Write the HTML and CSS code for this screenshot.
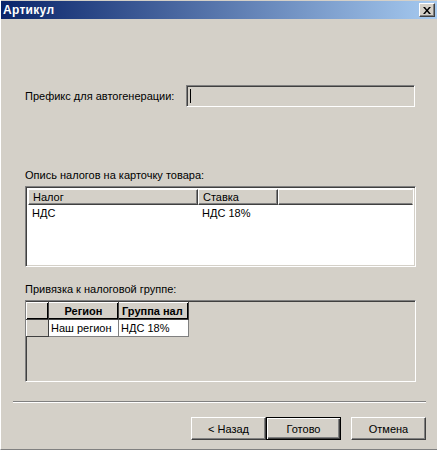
FILE: index.html
```html
<!DOCTYPE html>
<html lang="ru">
<head>
<meta charset="utf-8">
<title>Артикул</title>
<link rel="stylesheet" href="styles.css">
</head>
<body>
<div class="window">
  <div class="titlebar">
    <span class="title">Артикул</span>
    <button class="close" aria-label="Закрыть">
      <svg width="8" height="7" viewBox="0 0 8 7"><path d="M0 0h2l2 2.5L6 0h2L5 3.5 8 7H6L4 4.5 2 7H0l3-3.5z" fill="#000"/></svg>
    </button>
  </div>

  <div class="body">
    <div class="prefix-row">
      <label class="prefix-label">Префикс для автогенерации:</label>
      <div class="field sunken"><span class="caret"></span></div>
    </div>

    <div class="group taxes">
      <div class="caption">Опись налогов на карточку товара:</div>
      <div class="listview sunken">
        <div class="lv-head">
          <div class="lv-col c1">Налог</div>
          <div class="lv-col c2">Ставка</div>
          <div class="lv-col c3"></div>
        </div>
        <div class="lv-row">
          <div class="lv-cell c1">НДС</div>
          <div class="lv-cell c2">НДС 18%</div>
        </div>
      </div>
    </div>

    <div class="group binding">
      <div class="caption">Привязка к налоговой группе:</div>
      <div class="grid sunken">
        <table class="tbl">
          <tr>
            <th class="stub"></th>
            <th class="col-region">Регион</th>
            <th class="col-group">Группа нал</th>
          </tr>
          <tr>
            <td class="stub"></td>
            <td>Наш регион</td>
            <td>НДС 18%</td>
          </tr>
        </table>
      </div>
    </div>

    <div class="separator"></div>

    <div class="buttons">
      <button class="btn">&lt; Назад</button>
      <button class="btn default">Готово</button>
      <button class="btn cancel">Отмена</button>
    </div>
  </div>
</div>
</body>
</html>
```
FILE: styles.css
```css
* { box-sizing: border-box; }

html, body {
  margin: 0;
  padding: 0;
  background: #d4d0c8;
}

body {
  width: 437px;
  height: 450px;
  font-family: Tahoma, "Liberation Sans", "DejaVu Sans", sans-serif;
  font-size: 11px;
  color: #000;
  overflow: hidden;
}

.window {
  width: 437px;
  height: 450px;
  border-bottom: 1px solid #808080;
  border-left: 1px solid #fff;
  display: flex;
  flex-direction: column;
}

/* caption bar with the classic blue gradient */
.titlebar {
  margin-top: 1px;
  height: 18px;
  background: linear-gradient(to right, #0a246a, #a6caf0);
  display: flex;
  align-items: center;
  justify-content: space-between;
  padding: 0 2px 0 2px;
}

.title {
  color: #fff;
  font-weight: bold;
  font-size: 12px;
  letter-spacing: 0.3px;
}

.close {
  width: 16px;
  height: 14px;
  padding: 0;
  margin: 0;
  background: #d4d0c8;
  border: 1px solid;
  border-color: #fff #404040 #404040 #fff;
  box-shadow: inset -1px -1px #808080;
  display: flex;
  align-items: center;
  justify-content: center;
}

.body {
  flex: 1;
  display: flex;
  flex-direction: column;
  padding: 0 11px 0 11px;
}

/* 3D sunken frame */
.sunken {
  border: 1px solid;
  border-color: #808080 #fff #fff #808080;
  box-shadow: inset 1px 1px #404040, inset -1px -1px #d4d0c8;
}

.prefix-row {
  margin-top: 66px;
  display: flex;
  align-items: center;
  padding-left: 13px;
}

.prefix-label {
  width: 161px;
}

.field {
  width: 229px;
  height: 22px;
  background: #d4d0c8;
  position: relative;
}

.caret {
  position: absolute;
  left: 3px;
  top: 3px;
  width: 1px;
  height: 14px;
  background: #000;
}

.group {
  padding-left: 13px;
}

.taxes { margin-top: 62px; }
.binding { margin-top: 16px; }

.caption {
  height: 13px;
  line-height: 13px;
  margin-bottom: 4px;
}

.listview {
  width: 391px;
  height: 81px;
  background: #fff;
  padding: 2px;
}

.lv-head {
  display: flex;
  height: 16px;
}

.lv-col {
  height: 16px;
  line-height: 14px;
  padding-left: 4px;
  background: #d4d0c8;
  border: 1px solid;
  border-color: #fff #404040 #404040 #fff;
  box-shadow: inset -1px -1px #808080;
}

.lv-col.c1 { width: 170px; }
.lv-col.c2 { width: 80px; }
.lv-col.c3 { flex: 1; border-right-color: #d4d0c8; box-shadow: inset 0 -1px #808080; }

.lv-row {
  display: flex;
  height: 16px;
  line-height: 16px;
}

.lv-cell { padding-left: 4px; }
.lv-cell.c1 { width: 170px; }
.lv-cell.c2 { width: 80px; }

.grid {
  width: 391px;
  height: 82px;
  background: #d4d0c8;
  padding: 1px 0 0 0;
}

.tbl {
  border-collapse: collapse;
  font-size: 11px;
}

.tbl th {
  height: 17px;
  padding: 0 3px;
  font-weight: bold;
  background: #d4d0c8;
  border: 1px solid;
  border-color: #fff #404040 #404040 #fff;
  box-shadow: inset -1px -1px #000;
  white-space: nowrap;
  overflow: hidden;
}

.tbl th.stub { width: 22px; }
.tbl th.col-region { width: 70px; text-align: center; }
.tbl th.col-group { width: 70px; max-width: 70px; text-align: left; }

.tbl td {
  height: 17px;
  padding: 0 2px;
  background: #fff;
  border: 1px solid #808080;
  white-space: nowrap;
}

.tbl td.stub {
  background: #d4d0c8;
  border-color: #fff #404040 #404040 #fff;
}

.separator {
  margin-top: 19px;
  height: 2px;
  border-top: 1px solid #808080;
  border-bottom: 1px solid #fff;
  width: 413px;
  margin-left: 1px;
}

.buttons {
  margin-top: 14px;
  display: flex;
  justify-content: flex-end;
  padding-right: 0;
}

.btn {
  width: 75px;
  height: 23px;
  margin: 0;
  padding: 0;
  font: inherit;
  color: #000;
  background: #d4d0c8;
  border: 1px solid;
  border-color: #fff #404040 #404040 #fff;
  box-shadow: inset -1px -1px #808080;
}

/* default push button: black frame around the raised bevel */
.btn.default {
  border: 1px solid #000;
  box-shadow: inset 1px 1px #fff, inset -1px -1px #404040, inset -2px -2px #808080;
}

.btn.cancel { margin-left: 10px; }
```
